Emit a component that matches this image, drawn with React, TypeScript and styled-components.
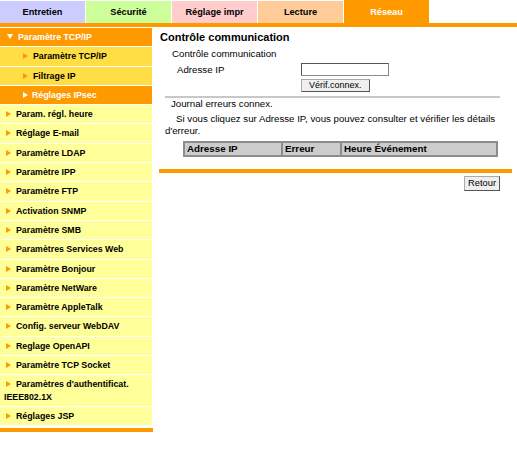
import React from "react";
import styled, { createGlobalStyle } from "styled-components";

const GlobalStyle = createGlobalStyle`
  body {
    margin: 0;
    background: #ffffff;
    font-family: "Liberation Sans", Arial, sans-serif;
    color: #000000;
  }
`;

const ORANGE = "#ff9900";

const tabs = [
  { label: "Entretien", color: "#ccccff" },
  { label: "Sécurité", color: "#ccff99" },
  { label: "Réglage impr", color: "#ffcccc" },
  { label: "Lecture", color: "#ffcc99" },
  { label: "Réseau", color: ORANGE, active: true },
];

const Page = styled.div`
  width: 517px;
`;

const TabBar = styled.div`
  display: flex;
  gap: 1px;
  height: 23px;
  align-items: flex-end;
  border-bottom: 4px solid ${ORANGE};
`;

const Tab = styled.div<{ $bg: string; $active?: boolean }>`
  width: 85px;
  height: ${({ $active }) => ($active ? "23px" : "22px")};
  background: ${({ $bg }) => $bg};
  color: ${({ $active }) => ($active ? "#ffffff" : "#000000")};
  font-size: 9.2px;
  font-weight: bold;
  display: flex;
  align-items: center;
  justify-content: center;
`;

const Body = styled.div`
  display: flex;
  align-items: flex-start;
  gap: 6px;
  padding-top: 1px;
`;

const Sidebar = styled.div`
  width: 153px;
  flex-shrink: 0;
  border-bottom: 4px solid ${ORANGE};
  padding-bottom: 2px;
`;

type Kind = "head" | "sub" | "subActive" | "plain";

const Item = styled.div<{ $kind: Kind }>`
  width: 152px;
  box-sizing: border-box;
  margin-bottom: 1px;
  padding: ${({ $kind }) => ($kind === "sub" || $kind === "subActive" ? "3px 0 3px 21px" : "3px 0 3px 4px")};
  font-size: 8.8px;
  font-weight: bold;
  line-height: 12.3px;
  background: ${({ $kind }) =>
    $kind === "head" || $kind === "subActive" ? ORANGE : $kind === "sub" ? "#ffdd44" : "#ffff99"};
  color: ${({ $kind }) => ($kind === "head" || $kind === "subActive" ? "#ffffff" : "#000000")};
`;

const Arrow = styled.span<{ $light?: boolean }>`
  display: inline-block;
  width: 0;
  height: 0;
  border-top: 3.5px solid transparent;
  border-bottom: 3.5px solid transparent;
  border-left: 5px solid ${({ $light }) => ($light ? "#ffffff" : ORANGE)};
  margin-left: 2px;
  margin-right: ${({ $light }) => ($light ? "4px" : "5px")};
  vertical-align: 0;
`;

const Down = styled.span`
  display: inline-block;
  width: 0;
  height: 0;
  border-left: 3px solid transparent;
  border-right: 3px solid transparent;
  border-top: 5px solid #ffffff;
  margin-left: 3px;
  margin-right: 5px;
  vertical-align: 1px;
`;

const Main = styled.div`
  width: 353px;
  padding-top: 1px;
`;

const Title = styled.div`
  font-size: 11px;
  font-weight: bold;
  padding-left: 1px;
  line-height: 16px;
`;

const Sub = styled.div`
  font-size: 9.7px;
  line-height: 12px;
  padding-left: 13px;
  margin-top: 3px;
`;

const FormRow = styled.div`
  display: flex;
  padding-left: 18px;
  margin-top: 3px;
  font-size: 9.7px;
`;

const FieldLabel = styled.div`
  width: 124px;
  line-height: 12px;
  padding-top: 1px;
`;

const FieldCol = styled.div`
  display: flex;
  flex-direction: column;
  align-items: flex-start;
  gap: 3px;
`;

const TextInput = styled.input`
  width: 88px;
  height: 13px;
  box-sizing: border-box;
  border: 1px solid #8a8a8a;
  border-top-color: #555;
  border-left-color: #555;
  padding: 0;
  margin: 0;
`;

const Button = styled.button`
  font-family: "Liberation Sans", Arial, sans-serif;
  font-size: 9px;
  height: 13px;
  padding: 0 7px;
  margin: 0;
  background: #efefef;
  border: 1px solid #aaa;
  border-right-color: #555;
  border-bottom-color: #555;
  line-height: 11px;
  color: #000;
`;

const Rule = styled.div`
  margin: 4px 12px 0 6px;
  height: 2px;
  background: #c8c8c8;
`;

const Para = styled.div<{ $indent: number; $gap: number }>`
  font-size: 9.7px;
  line-height: 12px;
  padding-left: 6px;
  text-indent: ${({ $indent }) => $indent}px;
  margin-top: ${({ $gap }) => $gap}px;
`;

const Table = styled.div`
  margin: 4px 14px 0 24px;
  display: grid;
  grid-template-columns: 96px 57px 1fr;
  gap: 2px;
  padding: 2px;
  background: #8c8c8c;
`;

const Th = styled.div`
  background: #cccccc;
  font-size: 9.8px;
  font-weight: bold;
  line-height: 12px;
  padding: 0 2px;
`;

const OrangeRule = styled.div`
  margin-top: 12px;
  height: 4px;
  background: ${ORANGE};
`;

const Footer = styled.div`
  display: flex;
  justify-content: flex-end;
  padding: 3px 12px 0 0;
`;

const BackButton = styled(Button)`
  height: 15px;
  padding: 0 3px;
  font-size: 9.3px;
`;

type Entry = { label: string; kind: Kind };

const menu: Entry[] = [
  { label: "Paramètre TCP/IP", kind: "head" },
  { label: "Paramètre TCP/IP", kind: "sub" },
  { label: "Filtrage IP", kind: "sub" },
  { label: "Réglages IPsec", kind: "subActive" },
  { label: "Param. régl. heure", kind: "plain" },
  { label: "Réglage E-mail", kind: "plain" },
  { label: "Paramètre LDAP", kind: "plain" },
  { label: "Paramètre IPP", kind: "plain" },
  { label: "Paramètre FTP", kind: "plain" },
  { label: "Activation SNMP", kind: "plain" },
  { label: "Paramètre SMB", kind: "plain" },
  { label: "Paramètres Services Web", kind: "plain" },
  { label: "Paramètre Bonjour", kind: "plain" },
  { label: "Paramètre NetWare", kind: "plain" },
  { label: "Paramètre AppleTalk", kind: "plain" },
  { label: "Config. serveur WebDAV", kind: "plain" },
  { label: "Reglage OpenAPI", kind: "plain" },
  { label: "Paramètre TCP Socket", kind: "plain" },
  { label: "Paramètres d'authentificat. IEEE802.1X", kind: "plain" },
  { label: "Réglages JSP", kind: "plain" },
];

export default function App() {
  return (
    <Page>
      <GlobalStyle />
      <TabBar>
        {tabs.map((t) => (
          <Tab key={t.label} $bg={t.color} $active={t.active}>
            {t.label}
          </Tab>
        ))}
      </TabBar>
      <Body>
        <Sidebar>
          {menu.map((m, i) => (
            <Item key={i} $kind={m.kind}>
              {m.kind === "head" ? <Down /> : <Arrow $light={m.kind === "subActive"} />}
              {m.label}
            </Item>
          ))}
        </Sidebar>
        <Main>
          <Title>Contrôle communication</Title>
          <Sub>Contrôle communication</Sub>
          <FormRow>
            <FieldLabel>Adresse IP</FieldLabel>
            <FieldCol>
              <TextInput type="text" />
              <Button>Vérif.connex.</Button>
            </FieldCol>
          </FormRow>
          <Rule />
          <Para $indent={6} $gap={0}>
            Journal erreurs connex.
          </Para>
          <Para $indent={11} $gap={3}>
            Si vous cliquez sur Adresse IP, vous pouvez consulter et vérifier les détails d'erreur.
          </Para>
          <Table>
            <Th>Adresse IP</Th>
            <Th>Erreur</Th>
            <Th>Heure Événement</Th>
          </Table>
          <OrangeRule />
          <Footer>
            <BackButton>Retour</BackButton>
          </Footer>
        </Main>
      </Body>
    </Page>
  );
}
